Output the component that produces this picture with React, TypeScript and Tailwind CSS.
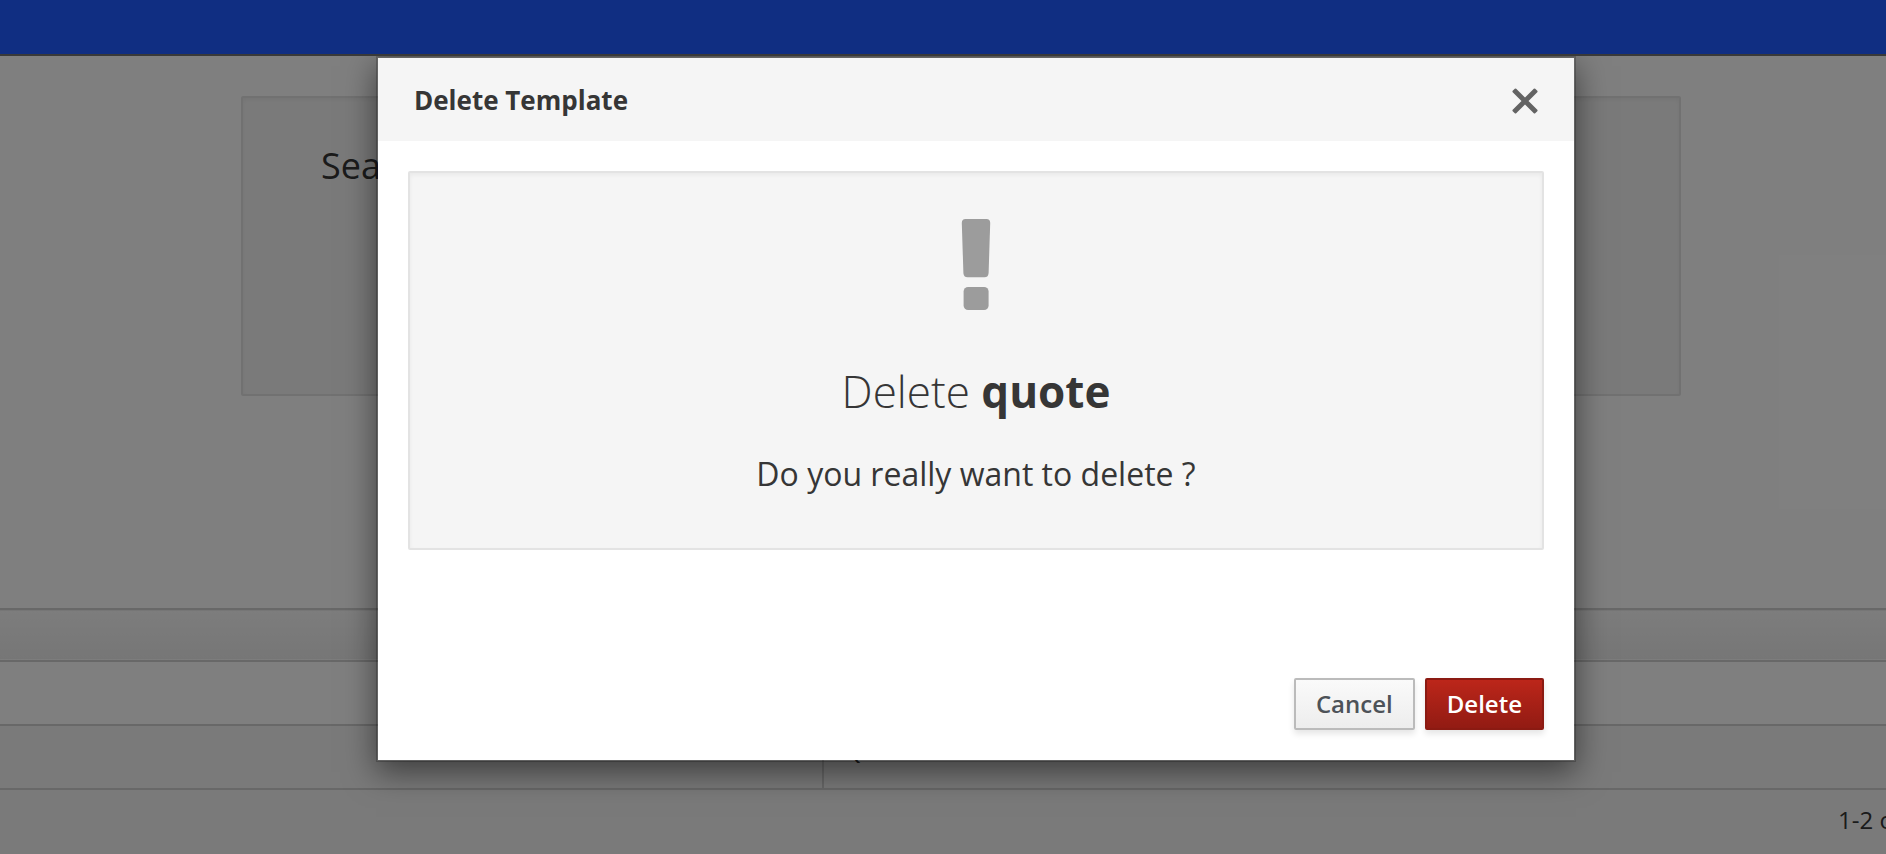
import React from "react";

function CloseIcon() {
  return (
    <svg viewBox="0 0 28 28" className="size-7" aria-hidden="true">
      <path
        d="M3.800 1.700Q4.500 1.100 5.200 1.700L14 10.500L22.800 1.700Q23.500 1.100 24.200 1.700L26.300 3.800Q26.900 4.500 26.300 5.200L17.500 14L26.300 22.800Q26.900 23.500 26.300 24.200L24.200 26.300Q23.500 26.900 22.800 26.300L14 17.500L5.200 26.300Q4.500 26.900 3.800 26.300L1.700 24.200Q1.100 23.500 1.700 22.800L10.500 14L1.700 5.200Q1.100 4.500 1.700 3.800Z"
        fill="#636363"
      />
    </svg>
  );
}

function ExclamationIcon() {
  return (
    <svg viewBox="0 0 30 92" className="h-[92px] w-[30px]" aria-hidden="true">
      <path
        d="M4.500 0H25.500Q29.300 0 29.200 4L27.600 54Q27.400 58.200 23.500 58.200H6.500Q2.600 58.200 2.400 54L.8 4Q.7 0 4.500 0Z"
        fill="#9c9c9c"
      />
      <rect x="2.600" y="68" width="25" height="23" rx="4.500" fill="#9c9c9c" />
    </svg>
  );
}

function TemplatePage() {
  return (
    <main className="pt-10">
      <div className="pl-9">
        <section className="mx-auto h-[300px] w-[1440px] max-w-full rounded-xs border-2 border-[#e3e3e3] bg-[#f5f5f5] px-[78px] pt-[43px] shadow-[inset_0_2px_4px_rgba(0,0,0,0.05)]">
          <h1 className="text-[36px] leading-[50px]">Search</h1>
        </section>
      </div>
      <table className="mt-[212px] w-full table-fixed border-collapse text-left text-2xl leading-8">
        <colgroup>
          <col className="w-[823px]" />
          <col />
        </colgroup>
        <thead>
          <tr className="h-[52px] border-y-2 border-[#d1d1d1] bg-linear-to-b from-[#fafafa] to-[#ededed]">
            <th />
            <th />
          </tr>
        </thead>
        <tbody>
          <tr className="h-16 border-b-2 border-[#d1d1d1]">
            <td className="border-r-2 border-[#d1d1d1]" />
            <td />
          </tr>
          <tr className="h-16 border-b-2 border-[#d1d1d1] bg-[#f5f5f5]">
            <td className="border-r-2 border-[#d1d1d1]" />
            <td className="px-5 pt-2 align-top">Quote</td>
          </tr>
        </tbody>
      </table>
      <footer className="flex h-16 justify-end bg-[#f5f5f5] pt-[10px] text-2xl">
        <span className="w-12 overflow-hidden leading-10 whitespace-nowrap">1-2 of</span>
      </footer>
    </main>
  );
}

function DeleteDialog() {
  return (
    <div className="absolute inset-0 flex items-start justify-center bg-black/50 pl-[66px]">
      <div
        role="dialog"
        aria-modal="true"
        aria-labelledby="dialog-title"
        className="mt-14 w-[1200px] max-w-full border-2 border-black/20 bg-white bg-clip-padding shadow-[0_10px_30px_rgba(0,0,0,0.5)]"
      >
        <header className="flex items-center justify-between bg-[#f5f5f5] pt-[21px] pr-[35px] pb-[19px] pl-9">
          <h2 id="dialog-title" className="text-[26px] leading-[43px] font-bold">
            Delete Template
          </h2>
          <button type="button" aria-label="Close">
            <CloseIcon />
          </button>
        </header>
        <div className="p-[30px]">
          <div className="flex flex-col items-center rounded-xs border-2 border-[#e3e3e3] bg-[#f5f5f5] pt-[46px] pb-[52px] text-center shadow-[inset_0_2px_4px_rgba(0,0,0,0.05)]">
            <ExclamationIcon />
            <h3 className="mt-14 text-[44px] leading-[48px] font-light">
              Delete <strong className="font-bold">quote</strong>
            </h3>
            <p className="mt-[37px] text-[32px] leading-[44px]">Do you really want to delete ?</p>
          </div>
        </div>
        <footer className="flex justify-end gap-[10px] px-[30px] pt-[98px] pb-[30px]">
          <button
            type="button"
            className="rounded-xs border-2 border-[#bbbbbb] bg-linear-to-b from-[#fafafa] to-[#ededed] px-5 py-1 text-2xl leading-10 font-semibold text-[#4d5258] shadow-[0_4px_6px_rgba(3,3,3,0.1)]"
          >
            Cancel
          </button>
          <button
            type="button"
            className="rounded-xs border-2 border-[#8b1a12] bg-linear-to-b from-[#bc261a] to-[#921b13] px-5 py-1 text-2xl leading-10 font-semibold text-white shadow-[0_4px_6px_rgba(3,3,3,0.1)]"
          >
            Delete
          </button>
        </footer>
      </div>
    </div>
  );
}

export default function App() {
  return (
    <div className="relative h-screen overflow-hidden bg-white font-['Open_Sans',sans-serif] text-[#363636]">
      <nav className="relative z-10 h-14 border-b-2 border-[#393939] bg-[#102e82]" />
      <TemplatePage />
      <DeleteDialog />
    </div>
  );
}
